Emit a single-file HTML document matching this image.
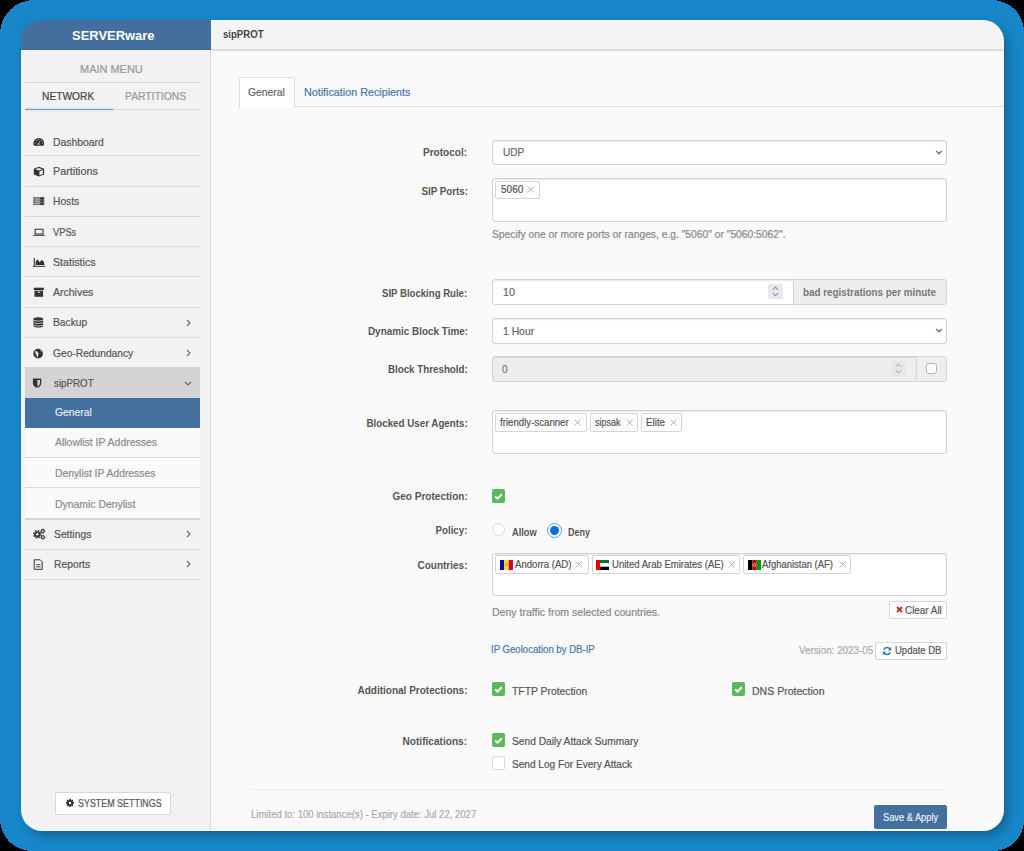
<!DOCTYPE html>
<html><head><meta charset="utf-8">
<style>
*{box-sizing:border-box;margin:0;padding:0}
html,body{width:1024px;height:851px;overflow:hidden;background:#000;font-family:"Liberation Sans",sans-serif}
#frame{position:absolute;left:0;top:0;width:1024px;height:851px}
#win{position:absolute;left:21px;top:20px;width:983px;height:811px;border-radius:21px;overflow:hidden;box-shadow:4px 5px 14px -3px rgba(0,0,0,.4)}
#pc{position:absolute;left:-21px;top:-20px;width:1024px;height:851px}
#pc div{position:absolute}
#pc svg{position:absolute}
.t{white-space:nowrap;line-height:1;transform-origin:0 0}
.r{transform-origin:100% 0}
.n{-webkit-text-stroke:0.2px currentColor}
#side{left:21px;top:50px;width:190px;height:781px;background:#f2f2f2;border-right:1px solid #dcdcdc}
#shead{left:21px;top:20px;width:190px;height:30px;background:#436e9e;border-bottom:1px solid #3e6492}
#mhead{left:211px;top:20px;width:793px;height:31px;background:#f4f4f4;border-bottom:2px solid #dedede}
.row{left:25px;width:175px;border-bottom:1px solid #d9d9d9}
.chev{left:186px}
.inp{left:492px;width:455px;background:#fff;border:1px solid #d2d2d2;border-radius:3px;box-shadow:inset 0 1px 1px rgba(0,0,0,.08)}
.tag{background:#fff;border:1px solid #d5d5d5;border-radius:2px;height:18px}
.cb{width:13px;height:14px;border-radius:2px;background:#5cb85c}
.cbo{width:13px;height:13px;border-radius:2px;background:#fff;border:1px solid #ccc}
.btn{background:#fff;border:1px solid #ccc;border-radius:2px}
</style></head><body>
<div id="frame"><svg width="1024" height="851" style="position:absolute;left:0;top:0"><path d="M34 0 H992 A32 32 0 0 1 1024 32 V820 A31 31 0 0 1 993 851 H32 A32 32 0 0 1 0 819 V34 A34 34 0 0 1 34 0 Z" fill="#1787c9" shape-rendering="crispEdges"/></svg>
<div id="win"><div id="pc">
<div style="left:211px;top:50px;width:793px;height:781px;background:#fafafa"></div>
 <!-- SIDEBAR -->
 <div id="side"></div>
 <div id="shead"></div>
 <div style="left:25px;top:82px;width:175px;height:1px;background:#d5d5d5"></div>
 <div style="left:25px;top:109px;width:175px;height:1px;background:#dadada"></div>
 <div style="left:25px;top:108px;width:88px;height:3px;background:linear-gradient(#d5dde7 0,#d5dde7 33%,#7f9dc1 33%,#7f9dc1 67%,#dde3ea 67%)"></div>
 <div class="row" style="top:125px;height:31px"></div>
 <div class="row" style="top:156px;height:31px"></div>
 <div class="row" style="top:187px;height:30px"></div>
 <div class="row" style="top:217px;height:30px"></div>
 <div class="row" style="top:247px;height:30px"></div>
 <div class="row" style="top:277px;height:31px"></div>
 <div class="row" style="top:308px;height:30px"></div>
 <svg class="chev" style="top:319px" width="5" height="8" viewBox="0 0 5 8"><path d="M1 1 L4 4 L1 7" fill="none" stroke="#666" stroke-width="1.1"/></svg>
 <svg class="chev" style="top:349px" width="5" height="8" viewBox="0 0 5 8"><path d="M1 1 L4 4 L1 7" fill="none" stroke="#666" stroke-width="1.1"/></svg>
 <div style="left:25px;top:367px;width:175px;height:31px;background:#d4d4d4"></div>
 <svg style="position:absolute;left:184px;top:381px" width="8" height="5" viewBox="0 0 8 5"><path d="M1 1 L4 4 L7 1" fill="none" stroke="#666" stroke-width="1.1"/></svg>
 <div style="left:25px;top:398px;width:175px;height:30px;background:#43709f"></div>
 <div style="left:25px;top:428px;width:175px;height:90px;background:#fafafa"></div>
 <div class="row" style="top:428px;height:30px"></div>
 <div class="row" style="top:458px;height:30px"></div>
 <div style="left:25px;top:518px;width:175px;height:2px;background:#d5d5d5"></div>
 <div class="row" style="top:520px;height:30px"></div>
 <svg class="chev" style="top:530px" width="5" height="8" viewBox="0 0 5 8"><path d="M1 1 L4 4 L1 7" fill="none" stroke="#666" stroke-width="1.1"/></svg>
 <div class="row" style="top:550px;height:30px"></div>
 <svg class="chev" style="top:560px" width="5" height="8" viewBox="0 0 5 8"><path d="M1 1 L4 4 L1 7" fill="none" stroke="#666" stroke-width="1.1"/></svg>
 <!-- sidebar icons -->
 <svg style="position:absolute;left:0;top:0" width="1024" height="851" viewBox="0 0 1024 851">
<g fill="#333">
 <path d="M34 145.8 A5.35 5.35 0 1 1 43.5 145.8 Z"/>
 <path d="M39 166.8 L44.1 168.8 L44.1 174.5 L39 176.5 L33.8 174.5 L33.8 168.8 Z"/>
 <rect x="33.7" y="258" width="1.1" height="8.8"/>
 <rect x="33.2" y="265.8" width="12.2" height="1"/>
 <path d="M35.6 265 L35.6 261.5 L37.6 259.2 L39.6 262.2 L41.6 260 L43.6 261.3 L44.6 265 Z"/>
 <rect x="33.8" y="287.7" width="10" height="2.3"/>
 <rect x="34.5" y="290.6" width="8.6" height="6.2"/>
 <rect x="33.4" y="317.2" width="9.7" height="10.3" rx="4.85" ry="1.8"/>
 <circle cx="38.15" cy="353.65" r="4.8"/>
 <path d="M32.9 378.6 H41.25 V383 Q41.25 386.6 37.07 387.8 Q32.9 386.6 32.9 383 Z"/>
 <circle cx="37.3" cy="534.3" r="3.1"/>
</g>
<g fill="#bdbdbd"><circle cx="35.1" cy="143" r="0.6"/><circle cx="36.3" cy="140.6" r="0.6"/><circle cx="38.6" cy="139.4" r="0.6"/><circle cx="41.3" cy="140.6" r="0.6"/><circle cx="42.5" cy="143" r="0.6"/><circle cx="38.6" cy="144.1" r="1"/></g>
<path d="M38.6 144 L39.6 141.2" stroke="#aaa" stroke-width="0.9"/>
<path d="M39.4 171.4 L42.9 170 L42.9 174 L39.4 175.3 Z" fill="#eee"/><path d="M35.2 169.2 L38.8 167.9 L42.5 169.2 L38.9 170.5 Z" fill="#e6e6e6"/>
<rect x="33.3" y="197.1" width="11" height="8" fill="#6a6a6a"/>
<rect x="34.6" y="198.2" width="5.2" height="1.6" fill="#a0a0a0"/>
<rect x="34.6" y="200.6" width="5.2" height="1.3" fill="#b8b8b8"/>
<rect x="34.6" y="202.8" width="5.2" height="1.3" fill="#b8b8b8"/>
<rect x="40.2" y="197.4" width="3.8" height="1.8" fill="#3a3a3a"/>
<rect x="40.6" y="200.1" width="3" height="1.6" fill="#444"/>
<rect x="40.2" y="203.2" width="3.8" height="1.7" fill="#3a3a3a"/>
<path d="M35.2 229.3 H43 V234 H35.2 Z" fill="none" stroke="#333" stroke-width="1.1"/>
<rect x="33.4" y="234.8" width="11.4" height="1" fill="#333"/>
<rect x="37.5" y="291.6" width="2.6" height="1" fill="#f2f2f2"/>
<path d="M33.6 320.3 Q38.25 322 42.9 320.3 M33.6 322.8 Q38.25 324.5 42.9 322.8 M33.6 325.3 Q38.25 327 42.9 325.3" fill="none" stroke="#f2f2f2" stroke-width="0.7"/>
<path d="M35.3 351.2 Q37 350.4 37.5 352.2 Q39.2 353 38.2 355 L37.6 357.6 Q36.2 356 36.5 354.5 Q34.6 353.6 35.3 351.2 Z M39.5 349.6 Q41.5 350.2 42 352 Q40.6 351.6 39.5 349.6 Z" fill="#f2f2f2"/>
<path d="M37.4 379.9 H40 V383 Q40 385.6 37.4 386.5 Z" fill="#d4d4d4"/>
<circle cx="37.3" cy="534.3" r="3.7" fill="none" stroke="#333" stroke-width="1.3" stroke-dasharray="1.6 1.3"/>
<circle cx="37.3" cy="534.3" r="1.2" fill="#f2f2f2"/>
<circle cx="42.8" cy="531.1" r="1.5" fill="none" stroke="#333" stroke-width="1.1"/>
<circle cx="42.8" cy="531.1" r="2.1" fill="none" stroke="#333" stroke-width="0.8" stroke-dasharray="1.1 1.1"/>
<circle cx="42.8" cy="537.2" r="1.5" fill="none" stroke="#333" stroke-width="1.1"/>
<circle cx="42.8" cy="537.2" r="2.1" fill="none" stroke="#333" stroke-width="0.8" stroke-dasharray="1.1 1.1"/>
<path d="M34.2 559.8 H40.2 L42.2 561.8 V569.3 H34.2 Z" fill="none" stroke="#333" stroke-width="1"/>
<path d="M36 564.6 H40.5 M36 566.8 H40.5" stroke="#333" stroke-width="0.9"/>
</svg>

 <div class="btn" style="left:55px;top:792px;width:116px;height:23px;border-color:#d8d8d8"></div>
 <svg style="left:65px;top:797.7px" width="10" height="10" viewBox="0 0 10 10"><g transform="translate(5 5) scale(0.86) translate(-5 -5)"><g fill="#333"><circle cx="5" cy="5" r="3.4"/><rect x="4" y="0.3" width="2" height="9.4"/><rect x="0.3" y="4" width="9.4" height="2"/><rect x="4" y="0.3" width="2" height="9.4" transform="rotate(45 5 5)"/><rect x="4" y="0.3" width="2" height="9.4" transform="rotate(-45 5 5)"/></g><circle cx="5" cy="5" r="1.4" fill="#fff"/></g></svg>

 <!-- MAIN -->
 <div id="mhead"></div>
 <div style="left:294px;top:106px;width:710px;height:1px;background:#dedede"></div>
 <div style="left:239px;top:77px;width:56px;height:31px;background:#fff;border:1px solid #dedede;border-bottom:none;border-radius:3px 3px 0 0"></div>

 <!-- Protocol -->
 <div class="inp" style="top:140px;height:25px"></div>
 <svg style="left:935px;top:149px" width="9" height="7" viewBox="0 0 9 7"><path d="M1.2 2 L4 4.8 L6.8 2" fill="none" stroke="#777" stroke-width="1.5"/></svg>
 <!-- SIP Ports -->
 <div class="inp" style="top:178px;height:44px"></div>
 <div class="tag" style="left:495px;top:181px;width:45px;height:18px"></div>
 <svg style="left:527px;top:186px" width="8" height="7" viewBox="0 0 8 7"><path d="M0.7 0.5 L6.7 6.5 M6.7 0.5 L0.7 6.5" stroke="#aaa" stroke-width="1"/></svg>
 <!-- SIP Blocking Rule -->
 <div class="inp" style="top:279px;height:26px;width:302px;border-radius:3px 0 0 3px"></div>
 <div style="left:768px;top:284px;width:15px;height:15px;background:#e8e8ee"></div>
 <svg style="left:771px;top:285px" width="9" height="13" viewBox="0 0 9 13"><path d="M1.9 4.6 L4.4 2.1 L6.9 4.6 M1.9 8.2 L4.4 10.7 L6.9 8.2" fill="none" stroke="#9a9aa5" stroke-width="1.3"/></svg>
 <div style="left:793px;top:279px;width:154px;height:26px;background:#eee;border:1px solid #d6d6d6;border-radius:0 3px 3px 0"></div>
 <!-- Dynamic Block Time -->
 <div class="inp" style="top:318px;height:26px"></div>
 <svg style="left:935px;top:327px" width="9" height="7" viewBox="0 0 9 7"><path d="M1.2 2 L4 4.8 L6.8 2" fill="none" stroke="#777" stroke-width="1.5"/></svg>
 <!-- Block Threshold -->
 <div class="inp" style="top:356px;height:26px;width:425px;background:#ededed;border-radius:3px 0 0 3px"></div>
 <div style="left:892px;top:361px;width:14px;height:15px;background:#e6e6ea"></div>
 <svg style="left:894px;top:362px" width="9" height="13" viewBox="0 0 9 13"><path d="M1.9 4.6 L4.4 2.1 L6.9 4.6 M1.9 8.2 L4.4 10.7 L6.9 8.2" fill="none" stroke="#b8b8c0" stroke-width="1.3"/></svg>
 <div style="left:916px;top:356px;width:31px;height:26px;background:#eee;border:1px solid #d6d6d6;border-radius:0 3px 3px 0"></div>
 <div class="cbo" style="left:926px;top:363px;width:11px;height:11px;border:1.5px solid #b5b5c2;border-radius:3px"></div>
 <!-- Blocked User Agents -->
 <div class="inp" style="top:410px;height:44px"></div>
 <div class="tag" style="left:495px;top:413px;width:92px;height:19px"></div>
 <svg style="left:574px;top:419px" width="8" height="7" viewBox="0 0 8 7"><path d="M0.7 0.5 L6.7 6.5 M6.7 0.5 L0.7 6.5" stroke="#aaa" stroke-width="1"/></svg>
 <div class="tag" style="left:590px;top:413px;width:48px;height:19px"></div>
 <svg style="left:625.5px;top:419px" width="8" height="7" viewBox="0 0 8 7"><path d="M0.7 0.5 L6.7 6.5 M6.7 0.5 L0.7 6.5" stroke="#aaa" stroke-width="1"/></svg>
 <div class="tag" style="left:641px;top:413px;width:41px;height:19px"></div>
 <svg style="left:669.5px;top:419px" width="8" height="7" viewBox="0 0 8 7"><path d="M0.7 0.5 L6.7 6.5 M6.7 0.5 L0.7 6.5" stroke="#aaa" stroke-width="1"/></svg>
 <!-- Geo Protection -->
 <div class="cb" style="left:492px;top:489px"></div><svg style="left:492px;top:489px" width="13" height="14" viewBox="0 0 13 14"><path d="M3.2 7.4 L5.5 9.6 L9.9 5.2" fill="none" stroke="#fff" stroke-width="2"/></svg>
 <!-- Policy -->
 <div style="left:492px;top:523px;width:13px;height:13px;border-radius:50%;background:#fff;border:1px solid #d9d9d9"></div>
 <div style="left:547px;top:523px;width:15px;height:15px;border-radius:50%;background:#fff;border:1.8px solid #5aa0f0"></div>
 <div style="left:550px;top:526px;width:9px;height:9px;border-radius:50%;background:#0d6fdc"></div>
 <!-- Countries -->
 <div class="inp" style="top:553px;height:43px"></div>
 <div class="tag" style="left:495px;top:555px;width:94px;height:19px"></div>
 <svg style="position:absolute;left:500px;top:560px" width="13" height="10" viewBox="0 0 13 10"><rect x="0" y="0" width="4.3" height="10" fill="#10069f"/><rect x="4.3" y="0" width="4.4" height="10" fill="#fedf00"/><rect x="8.7" y="0" width="4.3" height="10" fill="#d50032"/><rect x="5.6" y="3.5" width="1.8" height="2.5" fill="#c7a04a"/></svg>
 <svg style="left:575px;top:560.5px" width="8" height="7" viewBox="0 0 8 7"><path d="M0.7 0.5 L6.7 6.5 M6.7 0.5 L0.7 6.5" stroke="#aaa" stroke-width="1"/></svg>
 <div class="tag" style="left:592px;top:555px;width:148px;height:19px"></div>
 <svg style="position:absolute;left:596px;top:560px" width="13" height="10" viewBox="0 0 13 10"><rect x="0" y="0" width="4" height="10" fill="#ef0000"/><rect x="4" y="0" width="9" height="3.3" fill="#00732f"/><rect x="4" y="3.3" width="9" height="3.4" fill="#fff"/><rect x="4" y="6.7" width="9" height="3.3" fill="#000"/></svg>
 <svg style="left:727.5px;top:560.5px" width="8" height="7" viewBox="0 0 8 7"><path d="M0.7 0.5 L6.7 6.5 M6.7 0.5 L0.7 6.5" stroke="#aaa" stroke-width="1"/></svg>
 <div class="tag" style="left:743px;top:555px;width:108px;height:19px"></div>
 <svg style="position:absolute;left:748px;top:560px" width="13" height="10" viewBox="0 0 13 10"><rect x="0" y="0" width="4.3" height="10" fill="#000"/><rect x="4.3" y="0" width="4.4" height="10" fill="#be0000"/><rect x="8.7" y="0" width="4.3" height="10" fill="#009900"/><circle cx="6.5" cy="5" r="1.5" fill="none" stroke="#fff" stroke-width=".6"/></svg>
 <svg style="left:838.5px;top:560.5px" width="8" height="7" viewBox="0 0 8 7"><path d="M0.7 0.5 L6.7 6.5 M6.7 0.5 L0.7 6.5" stroke="#aaa" stroke-width="1"/></svg>
 <div class="btn" style="left:889px;top:601px;width:58px;height:18px;border-color:#d5d5d5"></div>
 <svg style="position:absolute;left:896px;top:606px" width="7" height="7" viewBox="0 0 7 7"><path d="M1 1 L6 6 M6 1 L1 6" stroke="#c9302c" stroke-width="2"/></svg>
 <div class="btn" style="left:875px;top:642px;width:72px;height:18px;border-color:#d5d5d5"></div>
 <svg style="position:absolute;left:882px;top:646px" width="10" height="10" viewBox="0 0 10 10"><path d="M8.3 3.6 A3.6 3.6 0 0 0 1.7 3.8 M1.7 6.4 A3.6 3.6 0 0 0 8.3 6.2" fill="none" stroke="#337ab7" stroke-width="1.6"/><path d="M9.2 0.8 L9.2 4.4 L5.8 4.4 Z M0.8 9.2 L0.8 5.6 L4.2 5.6 Z" fill="#337ab7"/></svg>
 <!-- Additional Protections -->
 <div class="cb" style="left:492px;top:682px"></div><svg style="left:492px;top:682px" width="13" height="14" viewBox="0 0 13 14"><path d="M3.2 7.4 L5.5 9.6 L9.9 5.2" fill="none" stroke="#fff" stroke-width="2"/></svg>
 <div class="cb" style="left:732px;top:682px"></div><svg style="left:732px;top:682px" width="13" height="14" viewBox="0 0 13 14"><path d="M3.2 7.4 L5.5 9.6 L9.9 5.2" fill="none" stroke="#fff" stroke-width="2"/></svg>
 <!-- Notifications -->
 <div class="cb" style="left:492px;top:733px"></div><svg style="left:492px;top:733px" width="13" height="14" viewBox="0 0 13 14"><path d="M3.2 7.4 L5.5 9.6 L9.9 5.2" fill="none" stroke="#fff" stroke-width="2"/></svg>
 <div class="cbo" style="left:492px;top:756px;width:13px;height:14px;border-color:#d9d9d9"></div>
 <!-- Footer -->
 <div style="left:252px;top:789px;width:695px;height:1px;background:#ececec"></div>
 <div style="left:874px;top:805px;width:73px;height:24px;background:#43709f;border-radius:2px"></div>

 <div class="t" id="t0" style="left:71.80px;top:28.51px;font-size:13.5px;color:#fff;font-weight:bold;transform:scaleX(0.9594);">SERVERware</div>
 <div class="t n" id="t1" style="left:80.20px;top:65.10px;font-size:10px;color:#999;transform:scaleX(1.0973);">MAIN MENU</div>
 <div class="t n" id="t2" style="left:42.00px;top:90.70px;font-size:10.5px;color:#444;transform:scaleX(0.9727);">NETWORK</div>
 <div class="t n" id="t3" style="left:125.40px;top:90.70px;font-size:10.5px;color:#999;transform:scaleX(0.9841);">PARTITIONS</div>
 <div class="t n" id="t4" style="left:53.40px;top:136.50px;font-size:11px;color:#555;transform:scaleX(0.9451);">Dashboard</div>
 <div class="t n" id="t5" style="left:53.40px;top:166.40px;font-size:11px;color:#555;transform:scaleX(0.9783);">Partitions</div>
 <div class="t n" id="t6" style="left:53.40px;top:196.40px;font-size:11px;color:#555;transform:scaleX(0.9310);">Hosts</div>
 <div class="t n" id="t7" style="left:53.40px;top:227.00px;font-size:11px;color:#555;transform:scaleX(0.8450);">VPSs</div>
 <div class="t n" id="t8" style="left:53.40px;top:257.22px;font-size:11px;color:#555;transform:scaleX(0.9662);">Statistics</div>
 <div class="t n" id="t9" style="left:53.40px;top:287.00px;font-size:11px;color:#555;transform:scaleX(0.9542);">Archives</div>
 <div class="t n" id="t10" style="left:53.40px;top:317.10px;font-size:11px;color:#555;transform:scaleX(0.9329);">Backup</div>
 <div class="t n" id="t11" style="left:53.40px;top:348.40px;font-size:11px;color:#555;transform:scaleX(0.9304);">Geo-Redundancy</div>
 <div class="t n" id="t12" style="left:53.60px;top:378.00px;font-size:11px;color:#555;transform:scaleX(0.8895);">sipPROT</div>
 <div class="t n" id="t13" style="left:54.80px;top:407.00px;font-size:11px;color:#e4eaf2;transform:scaleX(0.9371);">General</div>
 <div class="t n" id="t14" style="left:55.00px;top:437.40px;font-size:11px;color:#8a8a8a;transform:scaleX(0.9494);">Allowlist IP Addresses</div>
 <div class="t n" id="t15" style="left:55.00px;top:468.32px;font-size:11px;color:#8a8a8a;transform:scaleX(0.9394);">Denylist IP Addresses</div>
 <div class="t n" id="t16" style="left:55.00px;top:498.50px;font-size:11px;color:#8a8a8a;transform:scaleX(0.9471);">Dynamic Denylist</div>
 <div class="t n" id="t17" style="left:54.00px;top:529.32px;font-size:11px;color:#555;transform:scaleX(0.9382);">Settings</div>
 <div class="t n" id="t18" style="left:54.00px;top:559.32px;font-size:11px;color:#555;transform:scaleX(0.9369);">Reports</div>
 <div class="t n" id="t19" style="left:78.00px;top:797.60px;font-size:10.5px;color:#555;transform:scaleX(0.8485);">SYSTEM SETTINGS</div>
 <div class="t" id="t20" style="left:223.00px;top:29.00px;font-size:11px;color:#444;font-weight:bold;transform:scaleX(0.8723);">sipPROT</div>
 <div class="t n" id="t21" style="left:248.20px;top:87.10px;font-size:11px;color:#666;transform:scaleX(0.9371);">General</div>
 <div class="t n" id="t22" style="left:304.20px;top:87.10px;font-size:11px;color:#4a76a8;transform:scaleX(0.9771);">Notification Recipients</div>
 <div class="t r" id="t23" style="right:557.20px;top:147.10px;font-size:10.5px;color:#555;font-weight:bold;transform:scaleX(0.9567);">Protocol:</div>
 <div class="t r" id="t24" style="right:556.00px;top:186.00px;font-size:10.5px;color:#555;font-weight:bold;transform:scaleX(0.9315);">SIP Ports:</div>
 <div class="t r" id="t25" style="right:557.00px;top:287.60px;font-size:10.5px;color:#555;font-weight:bold;transform:scaleX(0.9142);">SIP Blocking Rule:</div>
 <div class="t r" id="t26" style="right:556.00px;top:325.70px;font-size:10.5px;color:#555;font-weight:bold;transform:scaleX(0.9438);">Dynamic Block Time:</div>
 <div class="t r" id="t27" style="right:556.00px;top:364.10px;font-size:10.5px;color:#555;font-weight:bold;transform:scaleX(0.9309);">Block Threshold:</div>
 <div class="t r" id="t28" style="right:556.00px;top:418.20px;font-size:10.5px;color:#555;font-weight:bold;transform:scaleX(0.9314);">Blocked User Agents:</div>
 <div class="t r" id="t29" style="right:556.60px;top:490.82px;font-size:10.5px;color:#555;font-weight:bold;transform:scaleX(0.9562);">Geo Protection:</div>
 <div class="t r" id="t30" style="right:557.00px;top:525.40px;font-size:10.5px;color:#555;font-weight:bold;transform:scaleX(0.9278);">Policy:</div>
 <div class="t r" id="t31" style="right:557.00px;top:559.60px;font-size:10.5px;color:#555;font-weight:bold;transform:scaleX(0.9536);">Countries:</div>
 <div class="t r" id="t32" style="right:556.60px;top:685.00px;font-size:10.5px;color:#555;font-weight:bold;transform:scaleX(0.9527);">Additional Protections:</div>
 <div class="t r" id="t33" style="right:557.00px;top:736.00px;font-size:10.5px;color:#555;font-weight:bold;transform:scaleX(0.9629);">Notifications:</div>
 <div class="t n" id="t34" style="left:502.60px;top:147.10px;font-size:10.5px;color:#666;transform:scaleX(0.9583);">UDP</div>
 <div class="t n" id="t35" style="left:500.60px;top:185.20px;font-size:10px;color:#555;transform:scaleX(1.0024);">5060</div>
 <div class="t n" id="t36" style="left:492.20px;top:229.80px;font-size:10px;color:#888;transform:scaleX(1.0281);">Specify one or more ports or ranges, e.g. &quot;5060&quot; or &quot;5060:5062&quot;.</div>
 <div class="t n" id="t37" style="left:503.00px;top:287.10px;font-size:10.5px;color:#666;transform:scaleX(1.0136);">10</div>
 <div class="t" id="t38" style="left:803.00px;top:288.00px;font-size:10px;color:#777;font-weight:bold;transform:scaleX(0.9852);">bad registrations per minute</div>
 <div class="t n" id="t39" style="left:503.00px;top:325.50px;font-size:10.5px;color:#666;transform:scaleX(0.9868);">1 Hour</div>
 <div class="t n" id="t40" style="left:502.40px;top:363.70px;font-size:10.5px;color:#777;transform:scaleX(0.9607);">0</div>
 <div class="t n" id="t41" style="left:499.80px;top:418.00px;font-size:10px;color:#555;transform:scaleX(0.9658);">friendly-scanner</div>
 <div class="t n" id="t42" style="left:595.00px;top:418.00px;font-size:10px;color:#555;transform:scaleX(0.8966);">sipsak</div>
 <div class="t n" id="t43" style="left:645.80px;top:418.00px;font-size:10px;color:#555;transform:scaleX(0.9805);">Elite</div>
 <div class="t" id="t44" style="left:512.20px;top:527.80px;font-size:10px;color:#555;font-weight:bold;transform:scaleX(0.9259);">Allow</div>
 <div class="t" id="t45" style="left:567.80px;top:527.80px;font-size:10px;color:#555;font-weight:bold;transform:scaleX(0.9026);">Deny</div>
 <div class="t n" id="t46" style="left:515.20px;top:560.00px;font-size:10px;color:#555;transform:scaleX(0.9588);">Andorra (AD)</div>
 <div class="t n" id="t47" style="left:611.60px;top:560.00px;font-size:10px;color:#555;transform:scaleX(0.9531);">United Arab Emirates (AE)</div>
 <div class="t n" id="t48" style="left:762.00px;top:560.00px;font-size:10px;color:#555;transform:scaleX(0.9449);">Afghanistan (AF)</div>
 <div class="t n" id="t49" style="left:492.20px;top:608.10px;font-size:10px;color:#888;transform:scaleX(1.0535);">Deny traffic from selected countries.</div>
 <div class="t n" id="t50" style="left:905.20px;top:606.01px;font-size:10px;color:#555;transform:scaleX(0.9876);">Clear All</div>
 <div class="t n" id="t51" style="left:491.20px;top:645.30px;font-size:10px;color:#4a76a8;transform:scaleX(0.9586);">IP Geolocation by DB-IP</div>
 <div class="t n" id="t52" style="left:798.80px;top:645.60px;font-size:10px;color:#aaa;transform:scaleX(0.9807);">Version: 2023-05</div>
 <div class="t n" id="t53" style="left:895.00px;top:646.20px;font-size:10px;color:#555;transform:scaleX(0.9496);">Update DB</div>
 <div class="t n" id="t54" style="left:512.00px;top:686.70px;font-size:10px;color:#555;transform:scaleX(1.0349);">TFTP Protection</div>
 <div class="t n" id="t55" style="left:752.00px;top:686.70px;font-size:10px;color:#555;transform:scaleX(1.0519);">DNS Protection</div>
 <div class="t n" id="t56" style="left:512.00px;top:737.10px;font-size:10px;color:#555;transform:scaleX(1.0201);">Send Daily Attack Summary</div>
 <div class="t n" id="t57" style="left:512.00px;top:759.70px;font-size:10px;color:#555;transform:scaleX(1.0085);">Send Log For Every Attack</div>
 <div class="t n" id="t58" style="left:250.60px;top:810.20px;font-size:10px;color:#aaa;transform:scaleX(0.9534);">Limited to: 100 instance(s) - Expiry date: Jul 22, 2027</div>
 <div class="t n" id="t59" style="left:882.60px;top:813.20px;font-size:10px;color:#e8eef5;transform:scaleX(0.9257);">Save &amp; Apply</div>
</div></div>
</div>
</body></html>
